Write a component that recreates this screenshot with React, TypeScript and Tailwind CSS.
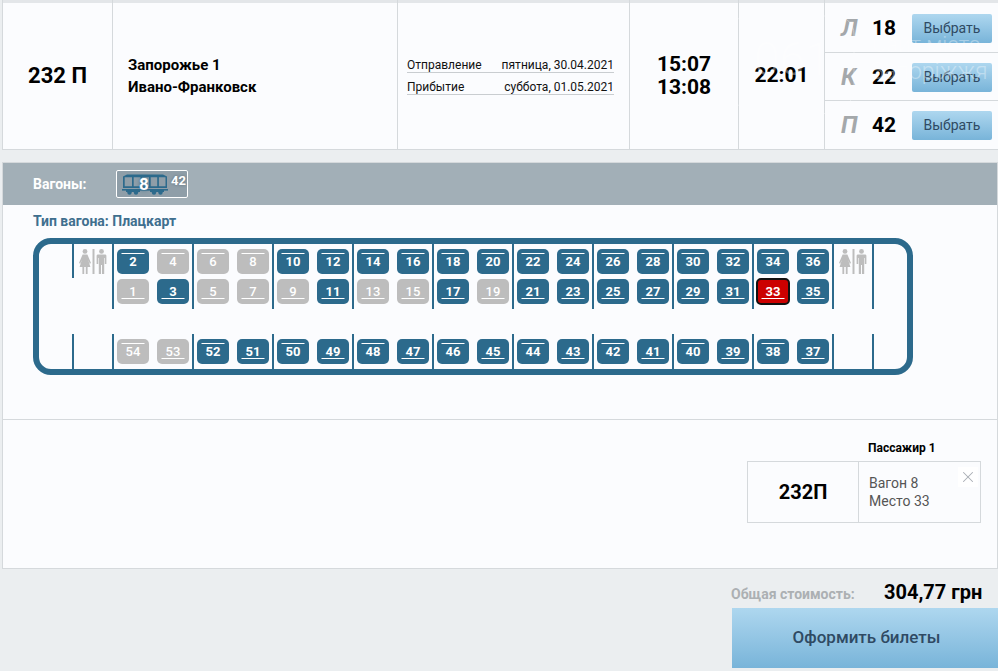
import { X } from "lucide-react";

const font = { fontFamily: "Roboto, sans-serif" };

// seats that are taken
const taken = [1, 4, 5, 6, 7, 8, 9, 13, 15, 19, 53, 54];

function Seat({ n, selected }: { n: number; selected?: boolean }) {
  const upper = n % 2 === 0;
  const color = selected
    ? "-m-px h-[27px] w-[34px] bg-[#cc0000] border-2 border-[#111] font-bold"
    : taken.includes(n)
      ? "h-[25px] w-[32px] bg-[#bdbdbd] font-medium"
      : "h-[25px] w-[32px] bg-[#2c6a8c] font-bold";
  return (
    <div className={`relative flex items-center justify-center rounded-[5px] text-[13px] leading-none text-white ${color}`}>
      <span
        className={`absolute left-1/2 h-px w-[23px] -translate-x-1/2 bg-white ${upper ? "top-[4px]" : selected ? "bottom-[4px]" : "bottom-[5px]"}`}
      />
      {n}
    </div>
  );
}

function WcIcon() {
  return (
    <svg width="28" height="25" viewBox="0 0 28 25" className="fill-[#bdbdbd]">
      <circle cx="6" cy="2.4" r="2.4" />
      <path d="M3.6 5.400h4.800L12 14l-1.200.7-1.600-3.600L11.400 18H8.600v7H6.800v-7H5.200v7H3.400v-7H.6l2.200-6.900-1.600 3.600L0 14z" />
      <rect x="13.500" y="0" width="2" height="25" />
      <circle cx="22.500" cy="2.400" r="2.400" />
      <path d="M19 5.400h7c.8 0 1.400.6 1.400 1.400V15h-1.600V9h-.6v16H23v-9h-1v9h-2.200V9h-.6v6h-1.600V6.800c0-.8.6-1.400 1.400-1.400z" />
    </svg>
  );
}

function WagonIcon() {
  return (
    <svg width="46" height="21" viewBox="0 0 46 21" className="fill-[#2c6a8c]">
      <path
        d="M1 2.500 5 .5h36l4 2V14H1zM2.700 3.200V12.300H10V3.200zm9 0V12.300H18.500V3.200zm8.500 0V12.300H27V3.200zm8.500 0V12.300h6.500V3.200zm8.200 0V12.300h6.600V3.200z"
        fillRule="evenodd"
      />
      <rect x="0" y="15" width="46" height="1.600" />
      <rect x="4" y="16" width="14" height="2" />
      <rect x="28" y="16" width="14" height="2" />
      <circle cx="7.500" cy="18.500" r="2.200" />
      <circle cx="14" cy="18.500" r="2.200" />
      <circle cx="32" cy="18.500" r="2.200" />
      <circle cx="38.500" cy="18.500" r="2.200" />
    </svg>
  );
}

function Compartment({ top, bottom }: { top: number[]; bottom?: number[] }) {
  return (
    <div className="w-[80px] border-l-2 border-[#2c6a8c] pl-[3px] pt-[5px]">
      <div className="flex gap-[8px]">
        {top.map((n) => (
          <Seat key={n} n={n} />
        ))}
      </div>
      {bottom && (
        <div className="mt-[5px] flex gap-[8px]">
          {bottom.map((n) => (
            <Seat key={n} n={n} selected={n === 33} />
          ))}
        </div>
      )}
    </div>
  );
}

function Train() {
  const upper = [0, 1, 2, 3, 4, 5, 6, 7, 8].map((i) => i * 4 + 1);
  const lower = [
    [54, 53],
    [52, 51],
    [50, 49],
    [48, 47],
    [46, 45],
    [44, 43],
    [42, 41],
    [40, 39],
    [38, 37],
  ];
  return (
    <div className="ml-[31px] mt-[8px] h-[137px] w-[880px] rounded-[18px] border-[6px] border-[#2c6a8c] pl-[33px]">
      <div className="flex h-[65px]">
        <div className="h-[34px] w-[40px] border-l-2 border-[#2c6a8c] pl-[5px] pt-[5px]">
          <WcIcon />
        </div>
        {upper.map((s) => (
          <Compartment key={s} top={[s + 1, s + 3]} bottom={[s, s + 2]} />
        ))}
        <div className="w-[40px] border-l-2 border-[#2c6a8c] pl-[5px] pt-[5px]">
          <WcIcon />
        </div>
        <div className="border-l-2 border-[#2c6a8c]" />
      </div>
      <div className="mt-[25px] flex h-[35px]">
        <div className="w-[40px] border-l-2 border-[#2c6a8c]" />
        {lower.map((pair) => (
          <Compartment key={pair[0]} top={pair} />
        ))}
        <div className="w-[40px] border-l-2 border-[#2c6a8c]" />
        <div className="border-l-2 border-[#2c6a8c]" />
      </div>
    </div>
  );
}

function TopCell({ className, children }: { className: string; children: React.ReactNode }) {
  return (
    <div className={`shrink-0 border-r border-[#d5d9dc] ${className}`}>
      <div className="h-[3px] bg-[#e3e6e9]" />
      <div className="h-[146px]">{children}</div>
    </div>
  );
}

function ClassRow({ letter, count, first }: { letter: string; count: number; first?: boolean }) {
  return (
    <div className={`flex items-center pl-[16px] ${first ? "h-[49px] pt-[1px]" : "h-[48px] border-t border-[#d5d9dc] pt-[1px]"}`}>
      <span className="w-[20px] text-[24px] font-bold italic text-[#a4a8ab]">{letter}</span>
      <span className="w-[51px] pl-[11px] text-[21px] font-bold leading-none text-black">{count}</span>
      <button className="h-[29px] w-[80px] rounded-[2px] bg-gradient-to-b from-[#aed7ef] to-[#78b4d9] text-[14px] text-[#2f4a63]">
        Выбрать
      </button>
    </div>
  );
}

function DateRow({ label, date }: { label: string; date: string }) {
  return (
    <div className="flex h-[22px] items-end justify-between border-b border-[#c9cdd0] text-[12px] leading-[13px] text-[#111]">
      <span>{label}</span>
      <span>{date}</span>
    </div>
  );
}

export default function App() {
  return (
    <div className="relative h-[671px] w-[998px] overflow-hidden bg-[#ebeef0]" style={font}>
      {/* train row */}
      <div className="ml-[2px] flex w-[996px] border-b border-l border-[#d5d9dc] bg-[#fbfcfe]">
        <TopCell className="w-[110px]">
          <div className="flex h-full items-center justify-center pb-[1px] text-[22px] font-bold text-black">232 П</div>
        </TopCell>
        <TopCell className="w-[285px]">
          <div className="flex h-full flex-col justify-center gap-[2px] pl-[15px] text-[15px] font-bold leading-[20px] text-black">
            <span>Запорожье 1</span>
            <span>Ивано-Франковск</span>
          </div>
        </TopCell>
        <TopCell className="w-[232px]">
          <div className="flex h-full flex-col justify-center px-[9px] pb-[7px] pr-[15px]">
            <DateRow label="Отправление" date="пятница, 30.04.2021" />
            <DateRow label="Прибытие" date="суббота, 01.05.2021" />
          </div>
        </TopCell>
        <TopCell className="w-[109px]">
          <div className="flex h-full flex-col items-center justify-center pb-[1px] text-[21px] font-bold leading-[23px] text-black">
            <span>15:07</span>
            <span>13:08</span>
          </div>
        </TopCell>
        <TopCell className="w-[86px]">
          <div className="flex h-full items-center justify-center text-[21px] font-bold text-black">22:01</div>
        </TopCell>
        <div className="w-[173px] shrink-0">
          <div className="h-[3px] bg-[#e3e6e9]" />
          <ClassRow letter="Л" count={18} first />
          <ClassRow letter="К" count={22} />
          <ClassRow letter="П" count={42} />
        </div>
      </div>

      {/* wagon panel */}
      <div className="ml-[2px] mt-[12px] h-[407px] border border-[#d5d9dc] bg-[#fbfcfe]">
        <div className="flex h-[42px] items-center bg-[#a2afb7]">
          <span className="ml-[30px] w-[83px] text-[14px] font-bold text-white">Вагоны:</span>
          <div className="relative flex h-[28px] w-[72px] items-center rounded-[2px] border border-white bg-[#8f9ea8] pl-[5px]">
            <WagonIcon />
            <span className="absolute left-[22px] top-[3px] text-[17px] font-bold leading-[20px] text-white [text-shadow:0_0_4px_#2c6a8c]">8</span>
            <span className="absolute right-[1px] top-[1px] text-[13px] font-bold leading-[17px] text-white [text-shadow:0_0_3px_#5d6d78]">42</span>
          </div>
        </div>
        <div className="ml-[30px] mt-[8px] text-[14px] font-bold leading-[17px] text-[#3f6f8e]">Тип вагона: Плацкарт</div>
        <div className="-ml-[1px]">
          <Train />
        </div>
        <div className="mt-[44px] border-t border-[#d5d9dc]">
          <div className="ml-[865px] mt-[20px] text-[12px] font-bold leading-[16px] text-black">Пассажир 1</div>
          <div className="ml-[744px] mt-[5px] flex h-[62px] w-[234px] border border-[#d5d9dc]">
            <div className="flex w-[111px] items-center justify-center border-r border-[#d5d9dc] text-[20px] font-bold text-black">232П</div>
            <div className="relative flex-1 pl-[10px] pt-[12px] text-[14px] leading-[18px] text-[#555]">
              <div>Вагон 8</div>
              <div>Место 33</div>
              <span className="absolute right-[2px] top-[5px] flex h-[20px] w-[20px] items-center justify-center bg-white text-[#a9adb5]">
                <X size={18} strokeWidth={1.4} />
              </span>
            </div>
          </div>
        </div>
      </div>

      {/* total */}
      <div className="ml-[731px] mt-[11px] flex items-end">
        <span className="w-[153px] pb-[1px] text-[14px] font-bold leading-[18px] text-[#acb0b3]">Общая стоимость:</span>
        <span className="text-[20px] font-bold leading-[24px] text-black">304,77 грн</span>
      </div>
      <button className="ml-[732px] mt-[4px] flex h-[60px] w-[266px] items-center justify-center bg-gradient-to-b from-[#aed7ef] to-[#78b4d9] pl-[3px] text-[17px] font-medium text-[#2f4a63]">
        Оформить билеты
      </button>

      {/* site watermark */}
      <div className="pointer-events-none absolute left-[728px] top-[14px] h-[105px] w-[270px] font-light text-white opacity-35">
        <svg width="130" height="105" viewBox="0 0 130 105" fill="none" stroke="white" strokeWidth="1" className="absolute left-0 top-0">
          <path d="M20 2h88a18 18 0 0 1 18 18v56a18 18 0 0 1-18 18h-6v9L88 94H20A18 18 0 0 1 2 76V20A18 18 0 0 1 20 2z" />
        </svg>
        <span className="absolute left-[26px] top-[20px] text-[46px] leading-[50px]">061</span>
        <span className="absolute left-[144px] top-[18px] text-[22px] leading-[26px]">Сайт міста</span>
        <span className="absolute left-[142px] top-[45px] text-[23px] leading-[26px]">Запоріжжя</span>
      </div>
    </div>
  );
}
